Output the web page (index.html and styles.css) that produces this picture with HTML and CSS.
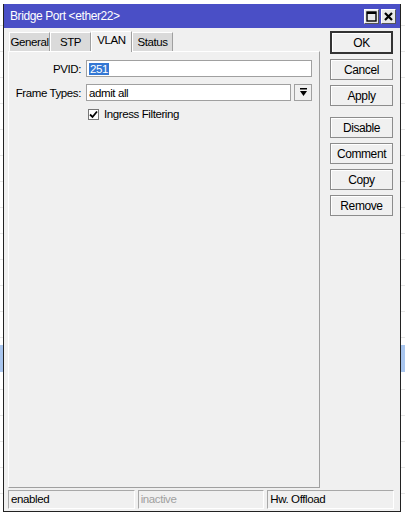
FILE: index.html
```html
<!DOCTYPE html>
<html lang="en">
<head>
    <meta charset="UTF-8">
    <meta name="viewport" content="width=device-width, initial-scale=1.0">
    <title>Bridge Port</title>
    <link rel="stylesheet" href="styles.css">
</head>
<body>

<div class="window">
    <div class="titlebar">
        <span class="title">Bridge Port &lt;ether22&gt;</span>
        <div class="win-buttons">
            <span class="win-btn">
                <svg width="11" height="11" viewBox="0 0 11 11"><rect x="1" y="1" width="9" height="9" fill="none" stroke="#000" stroke-width="1.4"/><line x1="1" y1="2" x2="10" y2="2" stroke="#000" stroke-width="2"/></svg>
            </span>
            <span class="win-btn">
                <svg width="11" height="11" viewBox="0 0 11 11"><path d="M2 2 L9 9 M9 2 L2 9" stroke="#000" stroke-width="2.2"/></svg>
            </span>
        </div>
    </div>

    <div class="body">
        <div class="main">
            <div class="tabs">
                <span class="tab">General</span>
                <span class="tab">STP</span>
                <span class="tab active">VLAN</span>
                <span class="tab">Status</span>
            </div>
            <div class="panel">
                <div class="row">
                    <label class="label">PVID:</label>
                    <div class="field"><span class="selected">251</span></div>
                </div>
                <div class="row">
                    <label class="label">Frame Types:</label>
                    <div class="field short">admit all</div>
                    <span class="drop">
                        <svg width="9" height="9" viewBox="0 0 9 9"><rect x="1" y="0" width="7" height="1.5" fill="#000"/><path d="M1 3 H8 L4.5 8 Z" fill="#000"/></svg>
                    </span>
                </div>
                <div class="check-row">
                    <span class="checkbox">
                        <svg width="9" height="9" viewBox="0 0 9 9"><path d="M1 4.5 L3.5 7 L8 1.5" fill="none" stroke="#000" stroke-width="1.8"/></svg>
                    </span>
                    <span>Ingress Filtering</span>
                </div>
            </div>
        </div>

        <div class="side">
            <button class="btn default">OK</button>
            <button class="btn">Cancel</button>
            <button class="btn">Apply</button>
            <button class="btn gap">Disable</button>
            <button class="btn">Comment</button>
            <button class="btn">Copy</button>
            <button class="btn">Remove</button>
        </div>
    </div>

    <div class="statusbar">
        <span class="status">enabled</span>
        <span class="status dim">inactive</span>
        <span class="status">Hw. Offload</span>
    </div>
</div>

</body>
</html>
```

FILE: styles.css
```css
body {
    margin: 0;
    padding: 0;
    font-family: "Liberation Sans", Arial, sans-serif;
    font-size: 11.5px;
    letter-spacing: -0.4px;
    color: #000;
    background:
        linear-gradient(transparent 345px, #a9c6ef 345px, #a9c6ef 372px, transparent 372px),
        repeating-linear-gradient(#fff 0 25px, #e6e6e6 25px 26px);
    height: 517px;
    overflow: hidden;
}
.window {
    margin: 4px 0 0 3px;
    width: 396px;
    height: 507px;
    border: 1px solid #222;
    border-top: none;
    background-color: #f0f0f0;
    display: flex;
    flex-direction: column;
}
.titlebar {
    height: 24px;
    background-color: #4a4fc6;
    color: #fff;
    display: flex;
    align-items: center;
    justify-content: space-between;
    padding: 0 4px 0 6px;
    font-size: 12px;
}
.win-buttons {
    display: flex;
    gap: 2px;
}
.win-btn {
    width: 15px;
    height: 15px;
    background-color: #e8e8e8;
    border: 1px solid #fff;
    border-right-color: #555;
    border-bottom-color: #555;
    box-sizing: border-box;
    display: flex;
    align-items: center;
    justify-content: center;
}
.body {
    flex: 1;
    display: flex;
    padding: 2px 6px 0 4px;
}
.main {
    width: 312px;
    display: flex;
    flex-direction: column;
}
.tabs {
    display: flex;
    height: 21px;
    align-items: flex-end;
    padding-left: 1px;
}
.tab {
    width: 41px;
    height: 19px;
    box-sizing: border-box;
    padding-top: 3px;
    text-align: center;
    background-color: #dadada;
    border-top: 1px solid #fff;
    border-left: 1px solid #fff;
    border-right: 1px solid #a0a0a0;
}
.tab.active {
    height: 21px;
    padding-top: 2px;
    background-color: #f0f0f0;
    margin-bottom: -1px;
    position: relative;
    z-index: 1;
}
.panel {
    flex: 1;
    border: 1px solid #fff;
    border-right-color: #a0a0a0;
    border-bottom-color: #a0a0a0;
    padding: 8px 7px 0 0;
}
.row {
    display: flex;
    align-items: center;
    margin-bottom: 7px;
}
.label {
    width: 72px;
    text-align: right;
    margin-right: 5px;
    white-space: nowrap;
}
.field {
    flex: 1;
    height: 17px;
    box-sizing: border-box;
    background-color: #fff;
    border: 1px solid #a0a0a0;
    padding: 1px 2px 0 2px;
    line-height: 14px;
}
.field.short {
    margin-right: 3px;
}
.selected {
    background-color: #3377d4;
    color: #fff;
    padding: 0 1px;
}
.drop {
    width: 18px;
    height: 17px;
    box-sizing: border-box;
    border: 1px solid #a0a0a0;
    background-color: #f0f0f0;
    display: flex;
    align-items: center;
    justify-content: center;
}
.check-row {
    display: flex;
    align-items: center;
    gap: 5px;
    margin-left: 79px;
}
.checkbox {
    width: 11px;
    height: 11px;
    box-sizing: border-box;
    background-color: #fff;
    border: 1px solid #777;
    display: flex;
    align-items: center;
    justify-content: center;
}
.side {
    margin-left: 10px;
    width: 63px;
    display: flex;
    flex-direction: column;
    gap: 5px;
    padding-top: 1px;
}
.btn {
    height: 21px;
    padding: 0;
    font-family: inherit;
    font-size: 12px;
    letter-spacing: -0.4px;
    color: #000;
    background-color: #f0f0f0;
    border: 1px solid #8c8c8c;
    box-shadow: inset 1px 1px 0 #fff;
}
.btn.default {
    height: 23px;
    border: 2px solid #333;
}
.btn.gap {
    margin-top: 6px;
}
.statusbar {
    height: 21px;
    display: flex;
    gap: 3px;
    padding: 2px 6px 0 4px;
}
.status {
    flex: 1;
    height: 19px;
    box-sizing: border-box;
    border: 1px solid #a8a8a8;
    border-right-color: #fff;
    border-bottom-color: #fff;
    padding: 2px 2px 0 2px;
}
.status.dim {
    color: #a0a0a0;
}
```
